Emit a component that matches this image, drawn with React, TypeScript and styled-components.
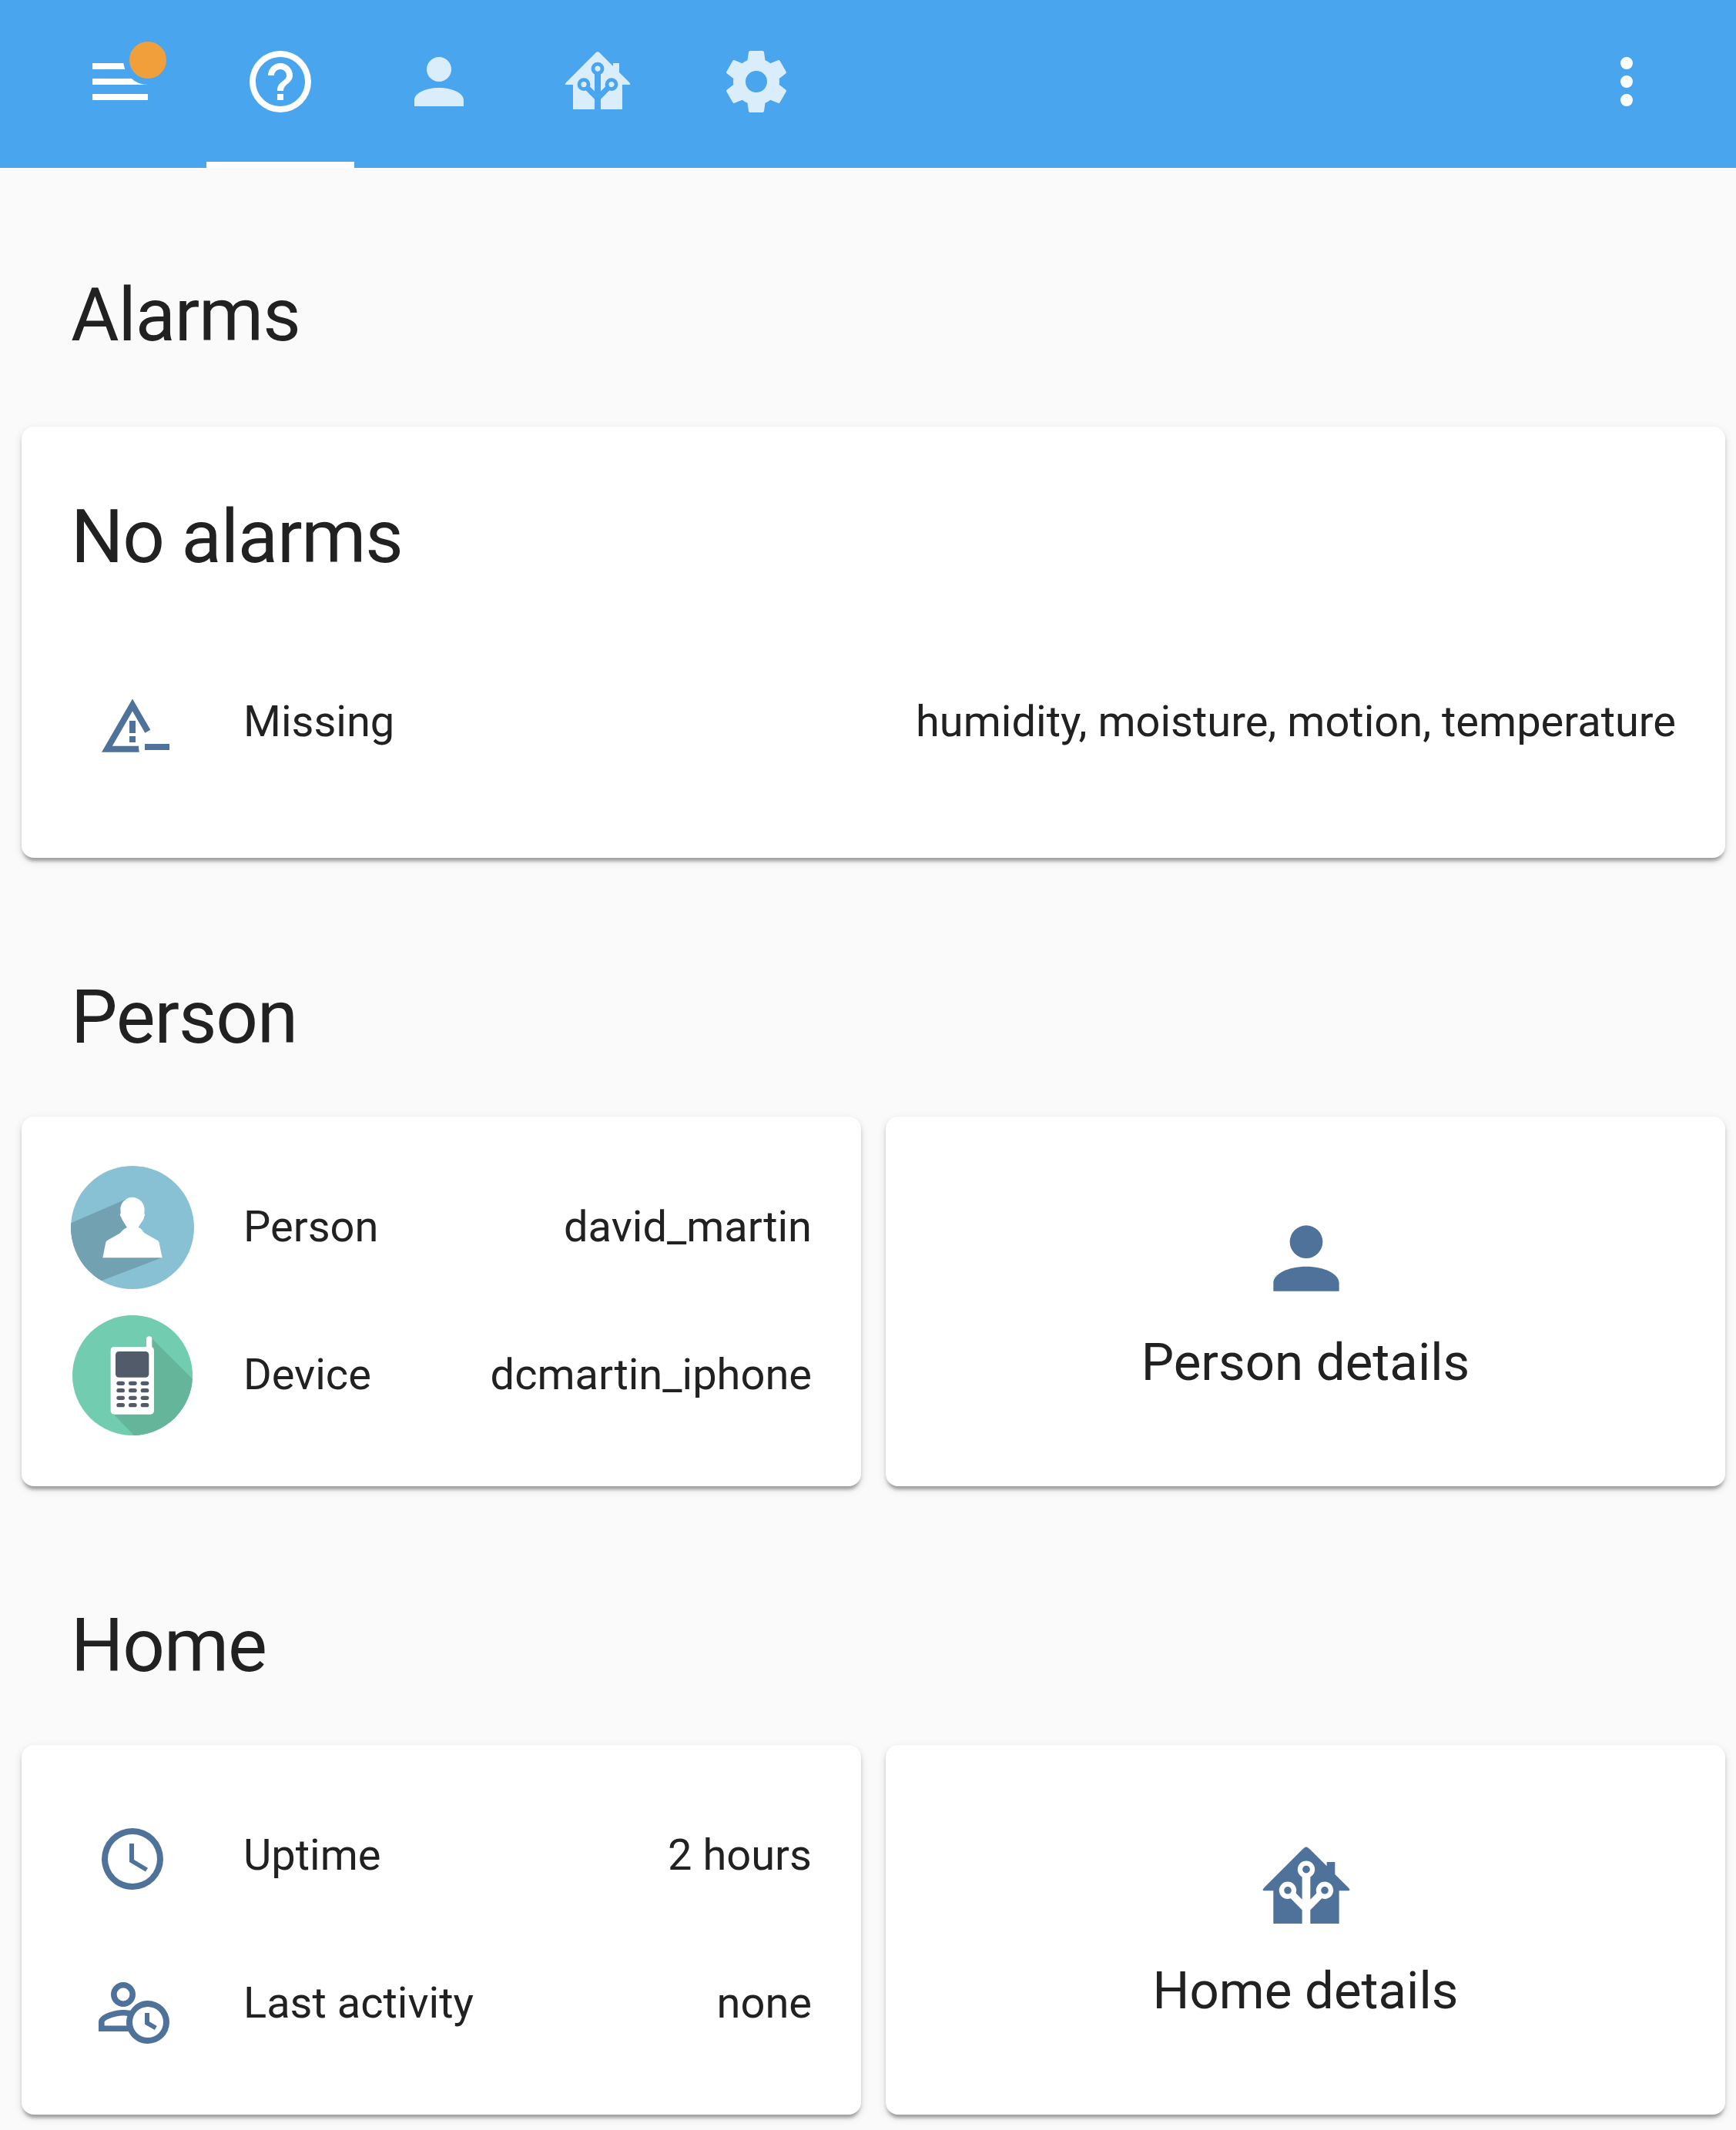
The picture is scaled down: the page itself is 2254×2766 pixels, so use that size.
import React from "react";
import styled, { createGlobalStyle } from "styled-components";

const GlobalStyle = createGlobalStyle`
  *, *::before, *::after { box-sizing: border-box; }
  html, body { margin: 0; padding: 0; background: #fafafa; }
  body {
    font-family: Roboto, "Noto Sans", sans-serif;
    color: #212121;
    overflow: hidden;
    -webkit-font-smoothing: antialiased;
  }
`;

const paths = {
  help: "M11,18H13V16H11V18M12,2A10,10 0 0,0 2,12A10,10 0 0,0 12,22A10,10 0 0,0 22,12A10,10 0 0,0 12,2M12,20C7.59,20 4,16.41 4,12C4,7.59 7.59,4 12,4C16.41,4 20,7.59 20,12C20,16.41 16.41,20 12,20M12,6A4,4 0 0,0 8,10H10A2,2 0 0,1 12,8A2,2 0 0,1 14,10C14,12 11,11.75 11,15H13C13,12.75 16,12.5 16,10A4,4 0 0,0 12,6Z",
  account:
    "M12,4A4,4 0 0,1 16,8A4,4 0 0,1 12,12A4,4 0 0,1 8,8A4,4 0 0,1 12,4M12,14C16.42,14 20,15.79 20,18V20H4V18C4,15.79 7.58,14 12,14Z",
  home: "M21.8,13H20V21H13V17.67L15.79,14.88L16.5,15C17.66,15 18.6,14.06 18.6,12.9C18.6,11.74 17.66,10.8 16.5,10.8A2.1,2.1 0 0,0 14.4,12.9L14.5,13.61L13,15.13V9.65C13.66,9.29 14.1,8.6 14.1,7.8A2.1,2.1 0 0,0 12,5.7A2.1,2.1 0 0,0 9.9,7.8C9.9,8.6 10.34,9.29 11,9.65V15.13L9.5,13.61L9.6,12.9A2.1,2.1 0 0,0 7.5,10.8A2.1,2.1 0 0,0 5.4,12.9A2.1,2.1 0 0,0 7.5,15L8.21,14.88L11,17.67V21H4V13H2.25C1.83,13 1.42,13 1.42,12.79C1.43,12.57 1.85,12.15 2.28,11.72L11,3C11.33,2.67 11.67,2.33 12,2.33C12.33,2.33 12.67,2.67 13,3L17,7V6H19V9L21.78,11.78C22.18,12.18 22.59,12.59 22.6,12.8C22.6,13 22.2,13 21.8,13M7.5,12A0.9,0.9 0 0,1 8.4,12.9A0.9,0.9 0 0,1 7.5,13.8A0.9,0.9 0 0,1 6.6,12.9A0.9,0.9 0 0,1 7.5,12M16.5,12C17,12 17.4,12.4 17.4,12.9C17.4,13.4 17,13.8 16.5,13.8A0.9,0.9 0 0,1 15.6,12.9A0.9,0.9 0 0,1 16.5,12M12,6.9C12.5,6.9 12.9,7.3 12.9,7.8C12.9,8.3 12.5,8.7 12,8.7C11.5,8.7 11.1,8.3 11.1,7.8C11.1,7.3 11.5,6.9 12,6.9Z",
  cog: "M12,15.5A3.5,3.5 0 0,1 8.5,12A3.5,3.5 0 0,1 12,8.5A3.5,3.5 0 0,1 15.5,12A3.5,3.5 0 0,1 12,15.5M19.43,12.97C19.47,12.65 19.5,12.33 19.5,12C19.5,11.67 19.47,11.34 19.43,11L21.54,9.37C21.73,9.22 21.78,8.95 21.66,8.73L19.66,5.27C19.54,5.05 19.27,4.96 19.05,5.05L16.56,6.05C16.04,5.66 15.5,5.32 14.87,5.07L14.5,2.42C14.46,2.18 14.25,2 14,2H10C9.75,2 9.54,2.18 9.5,2.42L9.13,5.07C8.5,5.32 7.96,5.66 7.44,6.05L4.95,5.05C4.73,4.96 4.46,5.05 4.34,5.27L2.34,8.73C2.21,8.95 2.27,9.22 2.46,9.37L4.57,11C4.53,11.34 4.5,11.67 4.5,12C4.5,12.33 4.53,12.65 4.57,12.97L2.46,14.63C2.27,14.78 2.21,15.05 2.34,15.27L4.34,18.73C4.46,18.95 4.73,19.03 4.95,18.95L7.44,17.94C7.96,18.34 8.5,18.68 9.13,18.93L9.5,21.58C9.54,21.82 9.75,22 10,22H14C14.25,22 14.46,21.82 14.5,21.58L14.87,18.93C15.5,18.67 16.04,18.34 16.56,17.94L19.05,18.95C19.27,19.03 19.54,18.95 19.66,18.73L21.66,15.27C21.78,15.05 21.73,14.78 21.54,14.63L19.43,12.97Z",
  menu: "M3,6H21V8H3V6M3,11H21V13H3V11M3,16H21V18H3V16Z",
  dots: "M12,16A2,2 0 0,1 14,18A2,2 0 0,1 12,20A2,2 0 0,1 10,18A2,2 0 0,1 12,16M12,10A2,2 0 0,1 14,12A2,2 0 0,1 12,14A2,2 0 0,1 10,12A2,2 0 0,1 12,10M12,4A2,2 0 0,1 14,6A2,2 0 0,1 12,8A2,2 0 0,1 10,6A2,2 0 0,1 12,4Z",
  alertMinus:
    "M12,3.4L2,20.7H14.2C14.05,20 14,19.3 14,18.7H5.46L12,7.4L16.1,14.45L17.83,13.45ZM11,10.5H13V14.5H11ZM11,15.5H13V17.5H11ZM16,18H24V20H16Z",
  clock:
    "M12,20A8,8 0 0,0 20,12A8,8 0 0,0 12,4A8,8 0 0,0 4,12A8,8 0 0,0 12,20M12,2A10,10 0 0,1 22,12A10,10 0 0,1 12,22C6.47,22 2,17.5 2,12A10,10 0 0,1 12,2M12.5,7V12.25L17,14.92L16.25,16.15L11,13V7H12.5Z",
  accountClock:
    "M9,4A4,4 0 0,0 5,8A4,4 0 0,0 9,12A4,4 0 0,0 13,8A4,4 0 0,0 9,4M9,5.9A2.1,2.1 0 0,1 11.1,8A2.1,2.1 0 0,1 9,10.1A2.1,2.1 0 0,1 6.9,8A2.1,2.1 0 0,1 9,5.9M17,10C14.5,10 12.6,11.2 11.35,13.2C10.5,13.06 9.68,13 9,13C6.33,13 1,14.33 1,17V20H10.68A7,7 0 0,0 17,24A7,7 0 0,0 24,17A7,7 0 0,0 17,10M17,12A5,5 0 0,1 22,17A5,5 0 0,1 17,22A5,5 0 0,1 12,17A5,5 0 0,1 17,12M9,14.9C9.48,14.9 9.93,14.93 10.35,15C10.1,15.7 10,16.3 10,17C10,17.4 10.03,17.74 10.09,18.1H2.9V17C2.9,16.36 6.03,14.9 9,14.9M16,14H17.5V16.82L19.94,18.23L19.19,19.53L16,17.69V14Z",
};

type IconName = keyof typeof paths;

const Svg = styled.svg<{ $size: number; $dim?: boolean }>`
  display: block;
  flex: none;
  overflow: visible;
  width: ${(p) => p.$size}px;
  height: ${(p) => p.$size}px;
  fill: currentColor;
  opacity: ${(p) => (p.$dim ? 0.8 : 1)};
`;

const Icon = ({ name, size = 96, dim }: { name: IconName; size?: number; dim?: boolean }) => (
  <Svg viewBox="0 0 24 24" $size={size} $dim={dim} aria-hidden="true">
    <path fillRule="evenodd" d={paths[name]} />
  </Svg>
);

const Page = styled.div`
  width: 2254px;
  height: 2766px;
  overflow: hidden;
  background: #fafafa;
`;

const Toolbar = styled.header`
  display: flex;
  align-items: stretch;
  height: 218px;
  padding: 0 94px 0 108px;
  background: #4aa5ef;
  color: #ffffff;
`;

const MenuButton = styled.button`
  position: relative;
  display: flex;
  align-items: center;
  width: 96px;
  height: 212px;
  padding: 0;
  border: 0;
  background: none;
  color: inherit;
`;

const Dot = styled.span`
  position: absolute;
  top: 46px;
  right: -20px;
  width: 64px;
  height: 64px;
  border: 8px solid #4aa5ef;
  border-radius: 50%;
  background: #f19f3a;
`;

const Tabs = styled.nav`
  display: flex;
  flex: 1;
  gap: 14px;
  margin-left: 64px;
`;

const Tab = styled.button<{ $active?: boolean }>`
  display: flex;
  align-items: center;
  justify-content: center;
  width: 192px;
  padding: 2px 0 0;
  border: solid transparent;
  border-width: 0 0 8px;
  border-bottom-color: ${(p) => (p.$active ? "#ffffff" : "transparent")};
  background: none;
  color: inherit;
`;

const MoreButton = styled.button`
  display: flex;
  align-items: center;
  height: 212px;
  padding: 0;
  border: 0;
  background: none;
  color: inherit;
`;

const Content = styled.main`
  padding: 0 14px 0 28px;
`;

const Heading = styled.h1<{ $height: number; $top: number }>`
  height: ${(p) => p.$height}px;
  margin: 0;
  padding: ${(p) => p.$top}px 64px 0;
  font-size: 96px;
  font-weight: 400;
  line-height: 128px;
  letter-spacing: -0.012em;
`;

const Grid = styled.section`
  display: grid;
  grid-template-columns: 1fr 1fr;
  gap: 32px;
`;

const Card = styled.div`
  border-radius: 16px;
  background: #ffffff;
  box-shadow:
    0 8px 4px -4px rgba(0, 0, 0, 0.2),
    0 4px 4px 0 rgba(0, 0, 0, 0.14),
    0 4px 12px 0 rgba(0, 0, 0, 0.12);
`;

const AlarmCard = styled(Card)`
  height: 560px;
`;

const AlarmRows = styled.div`
  padding: 32px 64px 0;
`;

const RowsCard = styled(Card)`
  display: flex;
  flex-direction: column;
  gap: 32px;
  height: 480px;
  padding: 64px;
`;

const RowBox = styled.div`
  display: flex;
  align-items: center;
  height: 160px;
  font-size: 56px;
  line-height: 80px;
  white-space: nowrap;
`;

const Badge = styled.div<{ $glyph: boolean }>`
  display: flex;
  align-items: center;
  justify-content: center;
  width: 160px;
  height: 160px;
  padding-top: ${(p) => (p.$glyph ? 8 : 0)}px;
  color: #4f729b;
`;

const Label = styled.span`
  flex: 1;
  margin-left: 64px;
  padding-bottom: 2px;
`;

const Value = styled.span`
  padding-bottom: 2px;
  text-align: right;
`;

const ButtonCard = styled(Card)`
  display: flex;
  flex-direction: column;
  align-items: center;
  height: 480px;
  padding-top: 120px;
`;

const ButtonIcon = styled.div`
  margin-left: 2px;
  color: #4f729b;
`;

const ButtonLabel = styled.span`
  margin-top: 31px;
  font-size: 67.2px;
  line-height: 80px;
`;

const Row = ({ badge, glyph = false, label, value }: { badge: React.ReactNode; glyph?: boolean; label: string; value: string }) => (
  <RowBox>
    <Badge $glyph={glyph}>{badge}</Badge>
    <Label>{label}</Label>
    <Value>{value}</Value>
  </RowBox>
);

const DetailsButton = ({ icon, label }: { icon: IconName; label: string }) => (
  <ButtonCard>
    <ButtonIcon>
      <Icon name={icon} size={128} />
    </ButtonIcon>
    <ButtonLabel>{label}</ButtonLabel>
  </ButtonCard>
);

const PersonAvatar = () => (
  <Svg viewBox="0 0 480 480" $size={160} aria-hidden="true">
    <defs>
      <clipPath id="person-disc">
        <circle cx="240" cy="240" r="240" />
      </clipPath>
    </defs>
    <g clipPath="url(#person-disc)">
      <rect width="480" height="480" fill="#88c0d4" />
      <path d="M215,130L-10,227V480H80L122,446L350,359L240,240Z" fill="#72a1b2" />
    </g>
    <path
      d="M239,122C262,122 287,141 287,170L286,187C289,188 289,192 286,197C284,212 269,225 263,240C275,242 279,254 287,262L340,292Q343,295 344,300L356,358H124L136,298Q137,294 142,290L192,262C200,252 207,244 219,240C212,228 201,215 195,198C190,193 190,188 194,185L193,166C195,141 217,122 239,122Z"
      fill="#ffffff"
    />
  </Svg>
);

const keyColumns = [178, 225, 272];
const keyRows = [263, 291, 320, 348];

const DeviceAvatar = () => (
  <Svg viewBox="0 0 480 480" $size={160} aria-hidden="true">
    <defs>
      <clipPath id="device-disc">
        <circle cx="240" cy="240" r="234" />
      </clipPath>
    </defs>
    <g clipPath="url(#device-disc)">
      <rect width="480" height="480" fill="#72cdb0" />
      <path d="M312,92L480,260V480H252L162,387Z" fill="#64b59a" />
    </g>
    <rect x="294" y="88" width="22" height="70" rx="11" fill="#ffffff" />
    <rect x="155" y="129" width="169" height="263" rx="14" fill="#ffffff" />
    <rect x="174" y="147" width="130" height="101" rx="13" fill="#525b69" />
    {keyRows.map((y) => keyColumns.map((x) => <rect key={`${x}-${y}`} x={x} y={y} width="32" height="16" rx="8" fill="#525b69" />))}
  </Svg>
);

export default function App() {
  return (
    <Page>
      <GlobalStyle />
      <Toolbar>
        <MenuButton aria-label="Menu">
          <Icon name="menu" />
          <Dot />
        </MenuButton>
        <Tabs>
          <Tab $active aria-label="Overview">
            <Icon name="help" />
          </Tab>
          <Tab aria-label="Person">
            <Icon name="account" dim />
          </Tab>
          <Tab aria-label="Home">
            <Icon name="home" dim />
          </Tab>
          <Tab aria-label="Settings">
            <Icon name="cog" dim />
          </Tab>
        </Tabs>
        <MoreButton aria-label="More">
          <Icon name="dots" />
        </MoreButton>
      </Toolbar>
      <Content>
        <Heading $height={336} $top={127}>Alarms</Heading>
        <AlarmCard>
          <Heading as="h2" $height={272} $top={79}>No alarms</Heading>
          <AlarmRows>
            <Row glyph badge={<Icon name="alertMinus" />} label="Missing" value="humidity, moisture, motion, temperature" />
          </AlarmRows>
        </AlarmCard>
        <Heading $height={336} $top={143}>Person</Heading>
        <Grid>
          <RowsCard>
            <Row badge={<PersonAvatar />} label="Person" value="david_martin" />
            <Row badge={<DeviceAvatar />} label="Device" value="dcmartin_iphone" />
          </RowsCard>
          <DetailsButton icon="account" label="Person details" />
        </Grid>
        <Heading $height={336} $top={143}>Home</Heading>
        <Grid>
          <RowsCard>
            <Row glyph badge={<Icon name="clock" />} label="Uptime" value="2 hours" />
            <Row glyph badge={<Icon name="accountClock" />} label="Last activity" value="none" />
          </RowsCard>
          <DetailsButton icon="home" label="Home details" />
        </Grid>
      </Content>
    </Page>
  );
}
